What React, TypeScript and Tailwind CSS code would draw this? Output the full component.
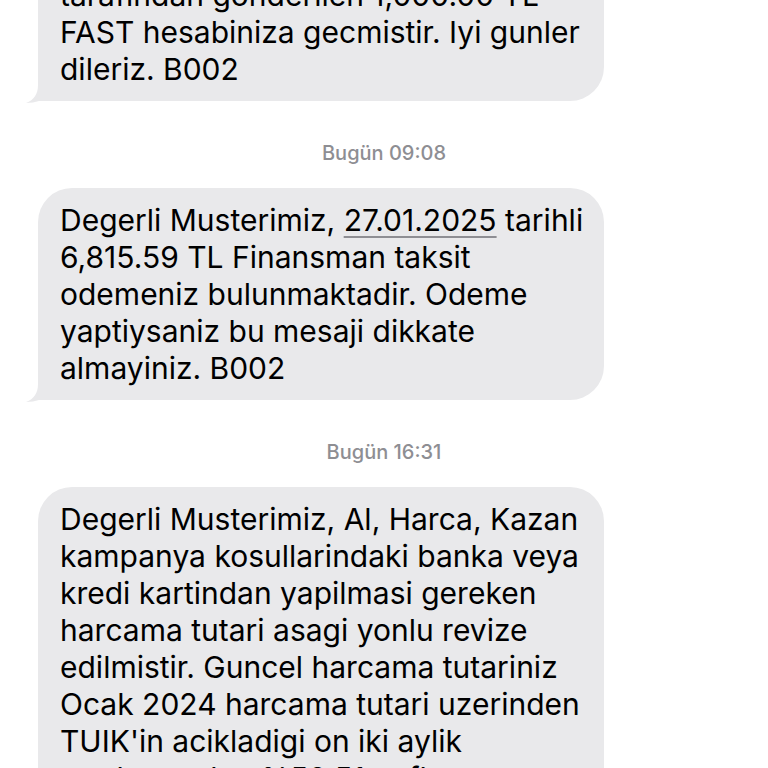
import React from "react";

const messages: { time?: string; lines: string[]; tail?: boolean }[] = [
  {
    lines: [
      "tarafindan gonderilen 1,000.00 TL",
      "FAST hesabiniza gecmistir. Iyi gunler",
      "dileriz. B002",
    ],
    tail: true,
  },
  {
    time: "09:08",
    lines: [
      "Degerli Musterimiz, |27.01.2025| tarihli",
      "6,815.59 TL Finansman taksit",
      "odemeniz bulunmaktadir. Odeme",
      "yaptiysaniz bu mesaji dikkate",
      "almayiniz. B002",
    ],
    tail: true,
  },
  {
    time: "16:31",
    lines: [
      "Degerli Musterimiz, Al, Harca, Kazan",
      "kampanya kosullarindaki banka veya",
      "kredi kartindan yapilmasi gereken",
      "harcama tutari asagi yonlu revize",
      "edilmistir. Guncel harcama tutariniz",
      "Ocak 2024 harcama tutari uzerinden",
      "TUIK'in acikladigi on iki aylik",
      "ortalama olan %58.51 enflasyon",
    ],
  },
];

// "|" marks a detected date (underlined like iOS data detectors)
function BubbleLine({ text }: { text: string }) {
  const parts = text.split("|");
  return (
    <div className="whitespace-nowrap">
      {parts.map((p, i) =>
        i % 2 === 1 ? (
          <span
            key={i}
            className="underline decoration-[#8e8e93] decoration-[1.5px] underline-offset-[5px]"
          >
            {p}
          </span>
        ) : (
          <span key={i}>{p}</span>
        )
      )}
    </div>
  );
}

function Tail() {
  return (
    <svg
      className="absolute -left-[12px] -bottom-[2px]"
      width="14"
      height="18"
      viewBox="0 0 14 18"
    >
      <path d="M12 0 C12 9 8 15 0 18 C5 18 9 17 13 16 L14 16 L14 0 Z" fill="#e9e9eb" />
    </svg>
  );
}

export default function App() {
  return (
    <div className="h-[768px] w-full overflow-hidden bg-white font-['Inter','Noto_Sans',sans-serif] antialiased">
      <div className="flex flex-col -mt-[37px]">
        {messages.map((m, i) => (
          <React.Fragment key={i}>
            {m.time && (
              <div className="mt-[41px] mb-[24px] text-center text-[20px] leading-[22px] font-medium text-[#8e8e93]">
                Bugün {m.time}
              </div>
            )}
            <div
              className={`relative ml-[38px] w-[566px] bg-[#e9e9eb] px-[22px] pt-[14px] pb-[13px] text-[30px] leading-[37px] text-black rounded-[34px] ${
                m.tail ? "rounded-bl-none" : ""
              }`}
            >
              {m.lines.map((l, j) => (
                <BubbleLine key={j} text={l} />
              ))}
              {m.tail && <Tail />}
            </div>
          </React.Fragment>
        ))}
      </div>
    </div>
  );
}
